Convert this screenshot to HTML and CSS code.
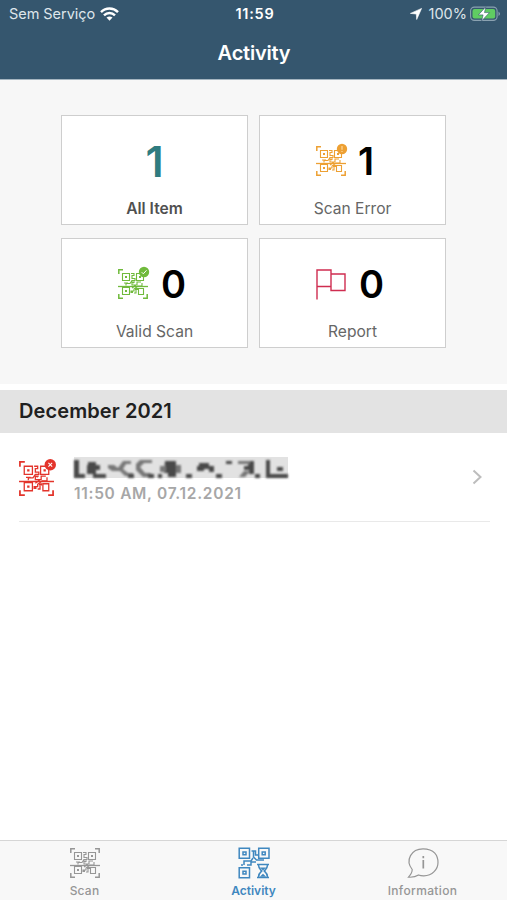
FILE: index.html
```html
<!DOCTYPE html>
<html lang="en">
<head>
  <meta charset="UTF-8">
  <title>Activity</title>
  <meta name="viewport" content="width=device-width, initial-scale=1.0">
  <link rel="stylesheet" href="styles.css">
</head>
<body>
  <!-- Shared icon shapes -->
  <svg class="sprite" width="0" height="0">
    <symbol id="qr-scan" viewBox="0 0 30 30">
      <g fill="none" stroke="currentColor">
        <path stroke-width="1.5" d="M.8 5V.8H5M25 .8h4.2V5M.8 25v4.2H5M25 29.2h4.2V25"/>
        <path stroke-width="1.100" d="M4.500 4.500h7v7h-7zM18.500 4.500h7v7h-7zM4.500 18.500h7v7h-7zM20.500 19.500h5v6h-5z"/>
        <path stroke-width="1.300" d="M0 17.500h30"/>
        <path stroke-width="1.100" d="M13 4.500h3v2h-2v3h3v2h-3l-2 3H8v2M17 13h-3v3h5v-3h4M10 14H6M24 14v3h-4l-4 3v2h-3v2M18 21v3h-2M13 12l3 2M18 16l-4 3"/>
      </g>
      <path fill="currentColor" d="M7 7h2v2H7zM21 7h2v2h-2zM7 21h2v2H7zM13 22h2v2h-2zM17 19h3v2h-3z"/>
    </symbol>
  </svg>

  <header class="header">
    <div class="status">
      <div class="status-left">
        <span class="carrier">Sem Serviço</span>
        <svg class="wifi" width="19" height="14" viewBox="0 0 19 14">
          <g fill="none" stroke="#fff" stroke-width="2.500">
            <path d="M1 5.100C5.800.4 13.200.4 18 5.100M4 8.300c3.100-3 7.900-3 11 0"/>
          </g>
          <path fill="#fff" d="M9.500 13.700 6.500 10.600q3-2.400 6 0z"/>
        </svg>
      </div>
      <span class="clock">11:59</span>
      <div class="status-right">
        <svg class="arrow" width="12" height="12" viewBox="0 0 12 12"><path fill="#fff" stroke="#fff" stroke-width=".6" d="M11.600.4 6.700 11.500 6.300 6 .4 5.400z"/></svg>
        <span class="percent">100%</span>
        <svg class="battery" width="31" height="16" viewBox="0 0 31 16">
          <rect x=".6" y="1.100" width="26.500" height="13.300" rx="3.800" fill="none" stroke="#8ba2b1" stroke-width="1.100"/>
          <rect x="2.500" y="3" width="22.700" height="9.500" rx="2" fill="#60cc62"/>
          <path d="M28.500 5.500q3 2.300 0 4.600z" fill="#8ba2b1"/>
          <path d="m15.800.8-7.400 8.100h4.700l-1.500 6 7.900-8.300h-5z" fill="#fff" stroke="#35566e" stroke-width=".6"/>
        </svg>
      </div>
    </div>
    <h1 class="title">Activity</h1>
  </header>

  <section class="summary">
    <div class="card card-all">
      <div class="card-top"><span class="count">1</span></div>
      <div class="label">All Item</div>
    </div>
    <div class="card card-error">
      <div class="card-top">
        <svg class="icon error" viewBox="0 0 30 30">
          <use href="#qr-scan"/>
          <circle cx="26" cy="3" r="5.200" fill="currentColor"/>
          <path d="M26 0v3.700M26 5v1" stroke="#ffd89a" stroke-width="1.200"/>
        </svg>
        <span class="count">1</span>
      </div>
      <div class="label">Scan Error</div>
    </div>
    <div class="card card-valid">
      <div class="card-top">
        <svg class="icon valid" viewBox="0 0 30 30">
          <use href="#qr-scan"/>
          <circle cx="26" cy="3" r="5.200" fill="currentColor"/>
          <path d="m23.700 3.200 1.600 1.600 3.200-3.500" fill="none" stroke="#fff" stroke-width="1"/>
        </svg>
        <span class="count">0</span>
      </div>
      <div class="label">Valid Scan</div>
    </div>
    <div class="card card-report">
      <div class="card-top">
        <svg class="icon flag" viewBox="0 0 30 30">
          <path d="M1 30.500V1h14v16.500H1M15 5h14v16.500H15V5" fill="none" stroke="currentColor" stroke-width="1.400"/>
        </svg>
        <span class="count">0</span>
      </div>
      <div class="label">Report</div>
    </div>
  </section>

  <h2 class="month">December 2021</h2>

  <div class="entry">
    <svg class="entry-icon" viewBox="0 0 30 30">
      <use href="#qr-scan"/>
      <circle cx="26.800" cy="3.200" r="4.900" fill="currentColor"/>
      <path d="m25.200 1.600 3.200 3.200m0-3.200-3.200 3.200" stroke="#fff" stroke-width=".9"/>
    </svg>
    <div class="entry-text">
      <!-- Item name is hidden behind a mosaic -->
      <svg class="mosaic" width="214" height="21" viewBox="0 0 214 21">
        <defs><filter id="soften" x="-5%" y="-20%" width="110%" height="140%"><feGaussianBlur stdDeviation="1.300"/></filter></defs>
        <rect width="214" height="21" fill="#e2e2e2"/>
        <g filter="url(#soften)">
          <path fill="#484848" d="M0 3h5v14h6v4H0zM14 5h8v3h4v5h-4v4h6v4h-9v-4h-6V8h1zM91 4h11v4h4v8h-4v4h-8v-4h-4zM125 6h10v3h5v6h-5v-3h-5v2h-7V9h2zM172 4h8v13h-5v-4h-5v-4h4V7h-2zM192 3h4v14h18v4h-22z"/>
          <path fill="#777" d="M34 8h6l4 3 5-7h8v3h-5l-3 5 5 4h5v3h-8l-5-5h-8l-4-3zM66 3h12v3h-8l-4 4 5 6h6v4h-8l-7-7V7zM86 9h6v6h-6zM102 8h5v8h-5zM164 4h12v3h-12zM170 14h6l-5 6h-6z"/>
          <path fill="#4c4c4c" d="M28 17h4v4h-4zM54 17h6v4h-6zM74 17h6v4h-6zM112 17h6v4h-6zM142 17h6v4h-6zM152 4h6v3h-6zM181 17h5v4h-5zM203 10h6v4h-6zM84 17h4v4h-4z"/>
        </g>
      </svg>
      <div class="time">11:50 AM, 07.12.2021</div>
    </div>
    <svg class="chevron" width="11" height="16" viewBox="0 0 11 16"><path d="m1.500 1.500 7 6.500-7 6.500" fill="none" stroke="#bdbdbd" stroke-width="2"/></svg>
  </div>

  <nav class="tabs">
    <div class="tab">
      <svg class="tab-icon" viewBox="0 0 30 30"><use href="#qr-scan"/></svg>
      <span>Scan</span>
    </div>
    <div class="tab active">
      <svg class="tab-icon" viewBox="0 0 30 30">
        <g fill="none" stroke="currentColor" stroke-width="1.500">
          <path d="M.2.3h10.300v9.900H.2zM19.700.3H30v9.900H19.700zM.2 19.700h10.300v10.100H.2zM4 4h3v2.700H4zM23.200 4h3v2.700h-3zM4 23.200h3V26H4z"/>
          <path d="M12.500 3h4v4h3M14.500 3v6l3 3H25M14 10l-2 3H5v4M12 13v4H8M2 17h2M12 14h5"/>
          <path d="M18 16.500h12M18 29.500h12M19.500 17c0 3.500 2 4.500 3.300 6-1.300 1.200-3.300 2.500-3.300 6M28.500 17c0 3.500-2 4.500-3.300 6 1.300 1.200 3.300 2.500 3.300 6"/>
        </g>
        <path fill="currentColor" d="M21 19.500h6l-3 3zM20.800 28.800l3.200-3 3.200 3z"/>
      </svg>
      <span>Activity</span>
    </div>
    <div class="tab tab-info">
      <svg class="tab-icon info" viewBox="0 0 32 30">
        <path d="M5.200 21.500C-2.200 12 4.500.8 16 .8S31 8 31 14.500 25.500 28 16.500 27.800q-2.800 0-5-.8c-2.500 1.700-6.200 2.400-10 2.200 2.200-2.500 3.800-4.500 3.700-7.700z" fill="none" stroke="currentColor" stroke-width="1.200"/>
        <path d="M16.300 8v2.300M16.300 12v8.500" stroke="currentColor" stroke-width="1.700"/>
      </svg>
      <span>Information</span>
    </div>
  </nav>
</body>
</html>
```
FILE: styles.css
```css
* {
  box-sizing: border-box;
}

body {
  margin: 0;
  height: 900px;
  background-color: #fff;
  font-family: Inter, "Liberation Sans", sans-serif;
  display: flex;
  flex-direction: column;
  overflow: hidden;
}

svg {
  flex-shrink: 0;
  overflow: visible;
}

.sprite {
  position: absolute;
}

.header {
  height: 80px;
  background: #35566e;
  border-bottom: 1px solid #a5b5c0;
  color: #fff;
}

.status {
  height: 27px;
  padding: 0 6px 0 9px;
  display: grid;
  grid-template-columns: 1fr auto 1fr;
  align-items: center;
  font-size: 14.5px;
}

.status-left,
.status-right {
  display: flex;
  align-items: center;
  color: #dfe6eb;
}

.status-left {
  gap: 5px;
}

.carrier {
  letter-spacing: -0.05px;
}

.status-right {
  justify-content: flex-end;
}

.clock {
  font-weight: 600;
  letter-spacing: 0.75px;
}

.arrow {
  margin-right: 7px;
}

.percent {
  margin-right: 3px;
}

.title {
  margin: 11px 0 0;
  padding-left: 1px;
  font-size: 20px;
  line-height: 30px;
  font-weight: 600;
  letter-spacing: -0.2px;
  text-align: center;
}

.summary {
  height: 304px;
  padding: 35px 61px;
  background: #f7f7f7;
  display: grid;
  grid-template-columns: 187px 187px;
  grid-template-rows: 110px 110px;
  gap: 13px 11px;
}

.card {
  background: #fff;
  border: 1px solid #cecece;
  text-align: center;
}

.card-top {
  height: 79px;
  padding-top: 11px;
  display: flex;
  align-items: center;
}

.card-all .card-top {
  justify-content: center;
}

.card-error .card-top,
.card-valid .card-top,
.card-report .card-top {
  padding-left: 56px;
}

.icon {
  width: 30px;
  height: 30px;
  margin-right: 13px;
}

.error {
  color: #eda033;
}

.valid {
  color: #70ba3c;
}

.flag {
  color: #cf2d50;
}

.count {
  color: #000;
  font-size: 38px;
  line-height: 40px;
  font-weight: 600;
}

.card-error .icon {
  margin-right: 12px;
}

.label {
  color: #666;
  font-size: 15.6px;
  line-height: 27px;
}

.card-all .count {
  color: #2f7c80;
  font-size: 43px;
}

.card-all .label {
  color: #505050;
  font-weight: 600;
}

.month {
  margin: 6px 0 0;
  padding-left: 19px;
  height: 43px;
  background: #e3e3e3;
  color: #202020;
  font-size: 20px;
  line-height: 43px;
  font-weight: 600;
  letter-spacing: 0.1px;
}

.entry {
  height: 89px;
  margin: 0 17px 0 19px;
  border-bottom: 1px solid #e9e9e9;
  display: flex;
  align-items: center;
}

.entry-icon {
  width: 35px;
  height: 35px;
  margin-top: 3px;
  color: #e3342b;
}

.entry-text {
  flex: 1;
  margin: 7px 0 0 20px;
}

.mosaic {
  display: block;
}

.time {
  color: #a7a7a7;
  font-size: 15.5px;
  line-height: 20px;
  font-weight: 600;
  letter-spacing: 0.7px;
  margin-top: 6px;
}

.chevron {
  margin-right: 7px;
}

.tabs {
  margin-top: auto;
  height: 60px;
  background: #f8f8f8;
  border-top: 1px solid #d6d6d6;
  display: grid;
  grid-template-columns: repeat(3, 1fr);
}

.tab {
  padding-top: 7px;
  display: flex;
  flex-direction: column;
  align-items: center;
  gap: 5px;
  color: #969696;
  font-size: 12px;
  line-height: 16px;
  font-weight: 500;
  letter-spacing: 0.2px;
}

.tab-icon {
  width: 30px;
  height: 30px;
}

.tab-info {
  letter-spacing: 0.35px;
}

.info {
  width: 32px;
}

.active {
  color: #3f87bf;
  font-weight: 600;
  letter-spacing: 0;
}
```
